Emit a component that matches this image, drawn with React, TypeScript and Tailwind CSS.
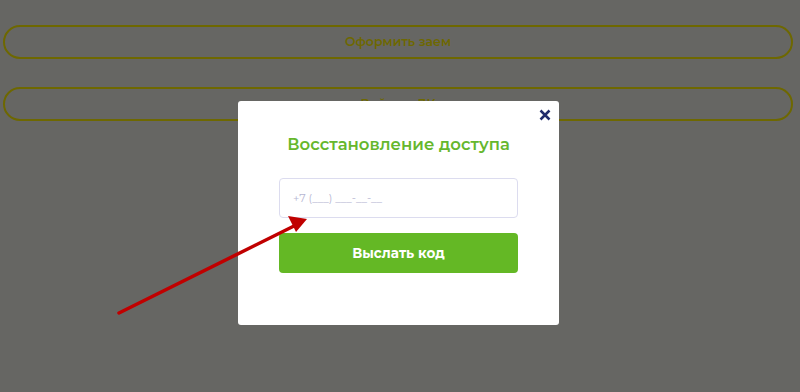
import * as React from "react";

/** Фон страницы под затемнением: две кнопки-обводки. */
function GhostButton({ label }: { readonly label: string }) {
  return (
    <button
      type="button"
      className="flex h-[34px] w-full items-center justify-center rounded-[17px] border-[2.5px] border-[#6e6800] text-[12.5px] font-semibold text-[#6e6800]"
    >
      {label}
    </button>
  );
}

function CloseIcon() {
  return (
    <svg aria-hidden="true" viewBox="0 0 12 12" className="h-[12px] w-[12px]">
      <path d="M1.5 1.5 L10.5 10.5 M10.5 1.5 L1.5 10.5" stroke="#1f2a6b" strokeWidth="2.5" />
    </svg>
  );
}

function Arrow() {
  return (
    <svg
      aria-hidden="true"
      className="pointer-events-none absolute left-0 top-0"
      width="800"
      height="392"
      viewBox="0 0 800 392"
    >
      <line x1="119" y1="313" x2="294" y2="226" stroke="#c00000" strokeWidth="3.5" strokeLinecap="round" />
      <polygon points="307,219 288,216 296,232" fill="#c00000" />
    </svg>
  );
}

export default function App() {
  return (
    <div
      className="relative h-[392px] w-[800px] overflow-hidden bg-[#666663]"
      style={{ fontFamily: '"Montserrat", "Noto Sans", sans-serif' }}
    >
      {/* страница под затемнением */}
      <div className="flex flex-col gap-[28px] px-[3px] pt-[25px] pr-[7px]">
        <GhostButton label="Оформить заем" />
        <GhostButton label="Войти в ЛК" />
      </div>

      {/* модальное окно */}
      <div className="absolute left-[238px] top-[101px] flex h-[224px] w-[321px] flex-col items-center rounded-[3px] bg-white">
        <button
          type="button"
          aria-label="Закрыть"
          className="absolute right-[7px] top-[7px] flex h-[14px] w-[14px] items-center justify-center"
        >
          <CloseIcon />
        </button>
        <h2 className="mt-[31px] text-[16.5px] font-semibold leading-[24px] text-[#66b72d]">
          Восстановление доступа
        </h2>
        <input
          type="tel"
          placeholder="+7 (___) ___-__-__"
          className="mt-[22px] h-[40px] w-[239px] rounded-[4px] border border-[#dcdcef] px-[13px] text-[11px] text-[#333] outline-none placeholder:text-[#b7b7d3]"
        />
        <button
          type="button"
          className="mt-[15px] flex h-[40px] w-[239px] items-center justify-center rounded-[4px] bg-[#64b825] text-[13.5px] font-bold text-white"
        >
          Выслать код
        </button>
      </div>

      <Arrow />
    </div>
  );
}
